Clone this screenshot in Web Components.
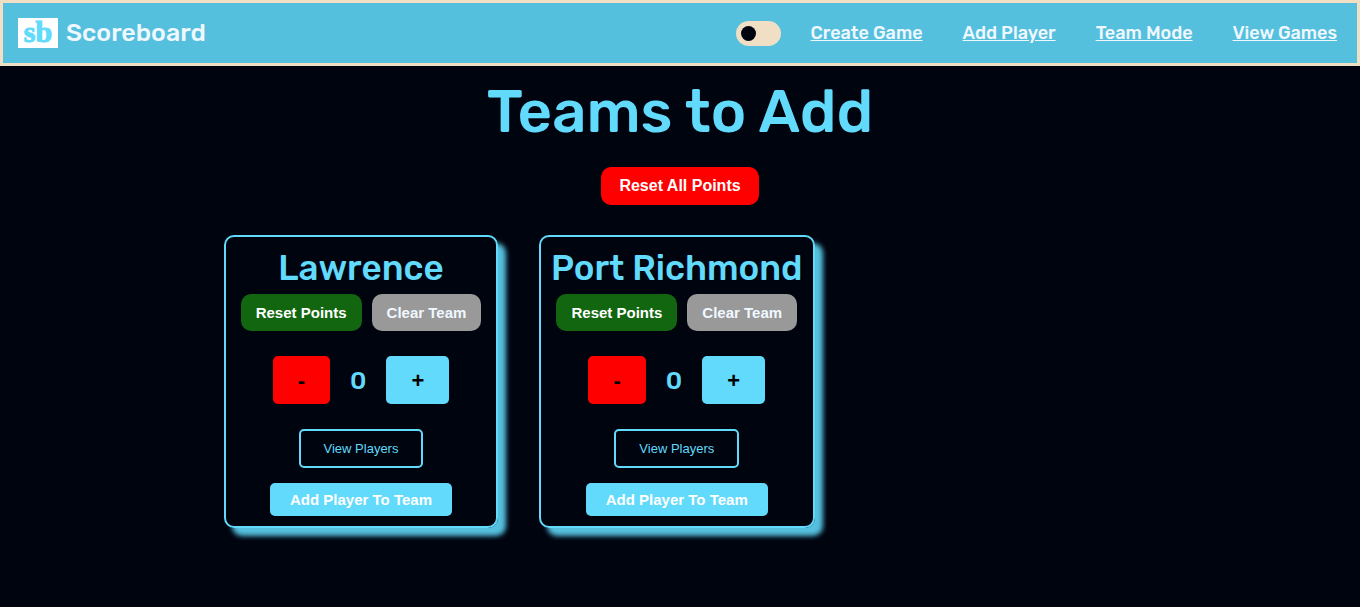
<!DOCTYPE html>
<html lang="en">
<head>
<meta charset="utf-8">
<meta name="viewport" content="width=device-width, initial-scale=1">
<title>Scoreboard</title>
<style>
  :root {
    --ink: #00040f;
    --sky: #61dafb;
    --bar: #55c0de;
    --cream: #f0dfc4;
    --pale: #f0f8ff;
  }
  body {
    margin: 0;
    min-height: 100vh;
    background: var(--ink);
    color: var(--sky);
    font-family: Rubik, Roboto, sans-serif;
  }
</style>
</head>
<body>
<score-header>
  <nav-link href="#create">Create Game</nav-link>
  <nav-link href="#add">Add Player</nav-link>
  <nav-link href="#teams">Team Mode</nav-link>
  <nav-link href="#games">View Games</nav-link>
</score-header>
<team-board heading="Teams to Add">
  <team-card name="Lawrence"></team-card>
  <team-card name="Port Richmond"></team-card>
</team-board>

<script>
class BaseElement extends HTMLElement {
  render(html) {
    this.attachShadow({ mode: 'open' }).innerHTML = html;
  }
}

customElements.define('theme-toggle', class extends BaseElement {
  connectedCallback() {
    this.render(`
      <style>
        :host { display: block; height: 25px; }
        input {
          appearance: none;
          display: flex;
          align-items: center;
          box-sizing: border-box;
          width: 45px;
          height: 25px;
          margin: 0;
          padding: 5px;
          border-radius: 13px;
          background: var(--cream);
          cursor: pointer;
        }
        input::before {
          content: "";
          width: 15px;
          height: 15px;
          border-radius: 50%;
          background: var(--ink);
        }
        input:checked { justify-content: flex-end; }
      </style>
      <input type="checkbox" role="switch" aria-label="Light theme">`);
  }
});

customElements.define('nav-link', class extends BaseElement {
  connectedCallback() {
    this.render(`
      <style>
        :host { display: block; }
        a { color: var(--pale); font-size: 18px; font-weight: 500; line-height: 24px; }
      </style>
      <a href="${this.getAttribute('href')}"><slot></slot></a>`);
  }
});

customElements.define('score-header', class extends BaseElement {
  connectedCallback() {
    this.render(`
      <style>
        :host {
          display: flex;
          align-items: center;
          justify-content: space-between;
          box-sizing: border-box;
          min-height: 66px;
          padding: 0 20px 0 15px;
          border: 3px solid var(--cream);
          background: var(--bar);
        }
        .brand { display: flex; align-items: center; gap: 8px; color: var(--pale); }
        .logo {
          width: 40px;
          height: 30px;
          background: #fff;
          color: var(--sky);
          font: bold 30px/28px "Liberation Serif", serif;
          -webkit-text-stroke: 1px var(--sky);
          text-align: center;
        }
        .title { font-size: 25px; font-weight: 500; line-height: 32px; }
        nav { display: flex; align-items: center; gap: 40px; }
        theme-toggle { margin-right: -10px; }
      </style>
      <div class="brand"><span class="logo">sb</span><span class="title">Scoreboard</span></div>
      <nav><theme-toggle></theme-toggle><slot></slot></nav>`);
  }
});

customElements.define('team-board', class extends BaseElement {
  connectedCallback() {
    this.render(`
      <style>
        :host { display: flex; flex-direction: column; align-items: center; padding: 10px 16px 40px; }
        h1 { margin: 0; font-size: 60px; font-weight: 500; line-height: 72px; text-align: center; }
        button {
          margin: 19px 0 30px;
          padding: 10px 18px;
          border: 0;
          border-radius: 10px;
          background: #f00;
          color: #fff;
          font: bold 16px/18px "Liberation Sans", Arial, sans-serif;
          cursor: pointer;
        }
        .cards { display: flex; flex-wrap: wrap; gap: 41px; width: 100%; max-width: 912px; }
      </style>
      <h1>${this.getAttribute('heading')}</h1>
      <button type="button">Reset All Points</button>
      <div class="cards"><slot></slot></div>`);
  }
});

customElements.define('team-card', class extends BaseElement {
  connectedCallback() {
    this.render(`
      <style>
        :host {
          display: flex;
          flex-direction: column;
          align-items: center;
          box-sizing: border-box;
          min-width: 274px;
          padding: 10px;
          border: 2px solid var(--sky);
          border-radius: 10px;
          box-shadow: 8px 8px 5px var(--bar);
        }
        h2 { margin: 0; font-size: 35px; font-weight: 500; line-height: 42px; white-space: nowrap; }
        .row { display: flex; align-items: center; justify-content: center; }
        .actions { gap: 10px; margin-top: 5px; }
        .score { gap: 20px; margin: 25px 0; }
        button {
          border: 0;
          border-radius: 5px;
          font: bold 15px/17px "Liberation Sans", Arial, sans-serif;
          cursor: pointer;
        }
        .actions button { padding: 10px 15px; border-radius: 10px; color: var(--pale); }
        .actions .reset { background: #11660f; color: #fff; }
        .actions .clear { background: #999; }
        .score button { height: 48px; padding: 0 25px; font-size: 22px; color: #000; }
        .score .minus { background: #f00; }
        .score .plus { background: var(--sky); }
        output { padding-top: 2px; font-size: 25px; font-weight: 500; line-height: 32px; }
        .view {
          padding: 10px 23px;
          border: 2px solid var(--sky);
          background: transparent;
          color: var(--sky);
          font-size: 13px;
          line-height: 15px;
          font-weight: 400;
        }
        .add { margin-top: 15px; padding: 8px 20px; background: var(--sky); color: #fff; }
      </style>
      <h2>${this.getAttribute('name')}</h2>
      <div class="row actions">
        <button type="button" class="reset">Reset Points</button>
        <button type="button" class="clear">Clear Team</button>
      </div>
      <div class="row score">
        <button type="button" class="minus" aria-label="Remove a point">-</button>
        <output>0</output>
        <button type="button" class="plus" aria-label="Add a point">+</button>
      </div>
      <button type="button" class="view">View Players</button>
      <button type="button" class="add">Add Player To Team</button>`);
    const output = this.shadowRoot.querySelector('output');
    const change = step => { output.value = Number(output.value) + step; };
    this.shadowRoot.querySelector('.minus').addEventListener('click', () => change(-1));
    this.shadowRoot.querySelector('.plus').addEventListener('click', () => change(1));
    this.shadowRoot.querySelector('.reset').addEventListener('click', () => { output.value = 0; });
  }
});
</script>
</body>
</html>
